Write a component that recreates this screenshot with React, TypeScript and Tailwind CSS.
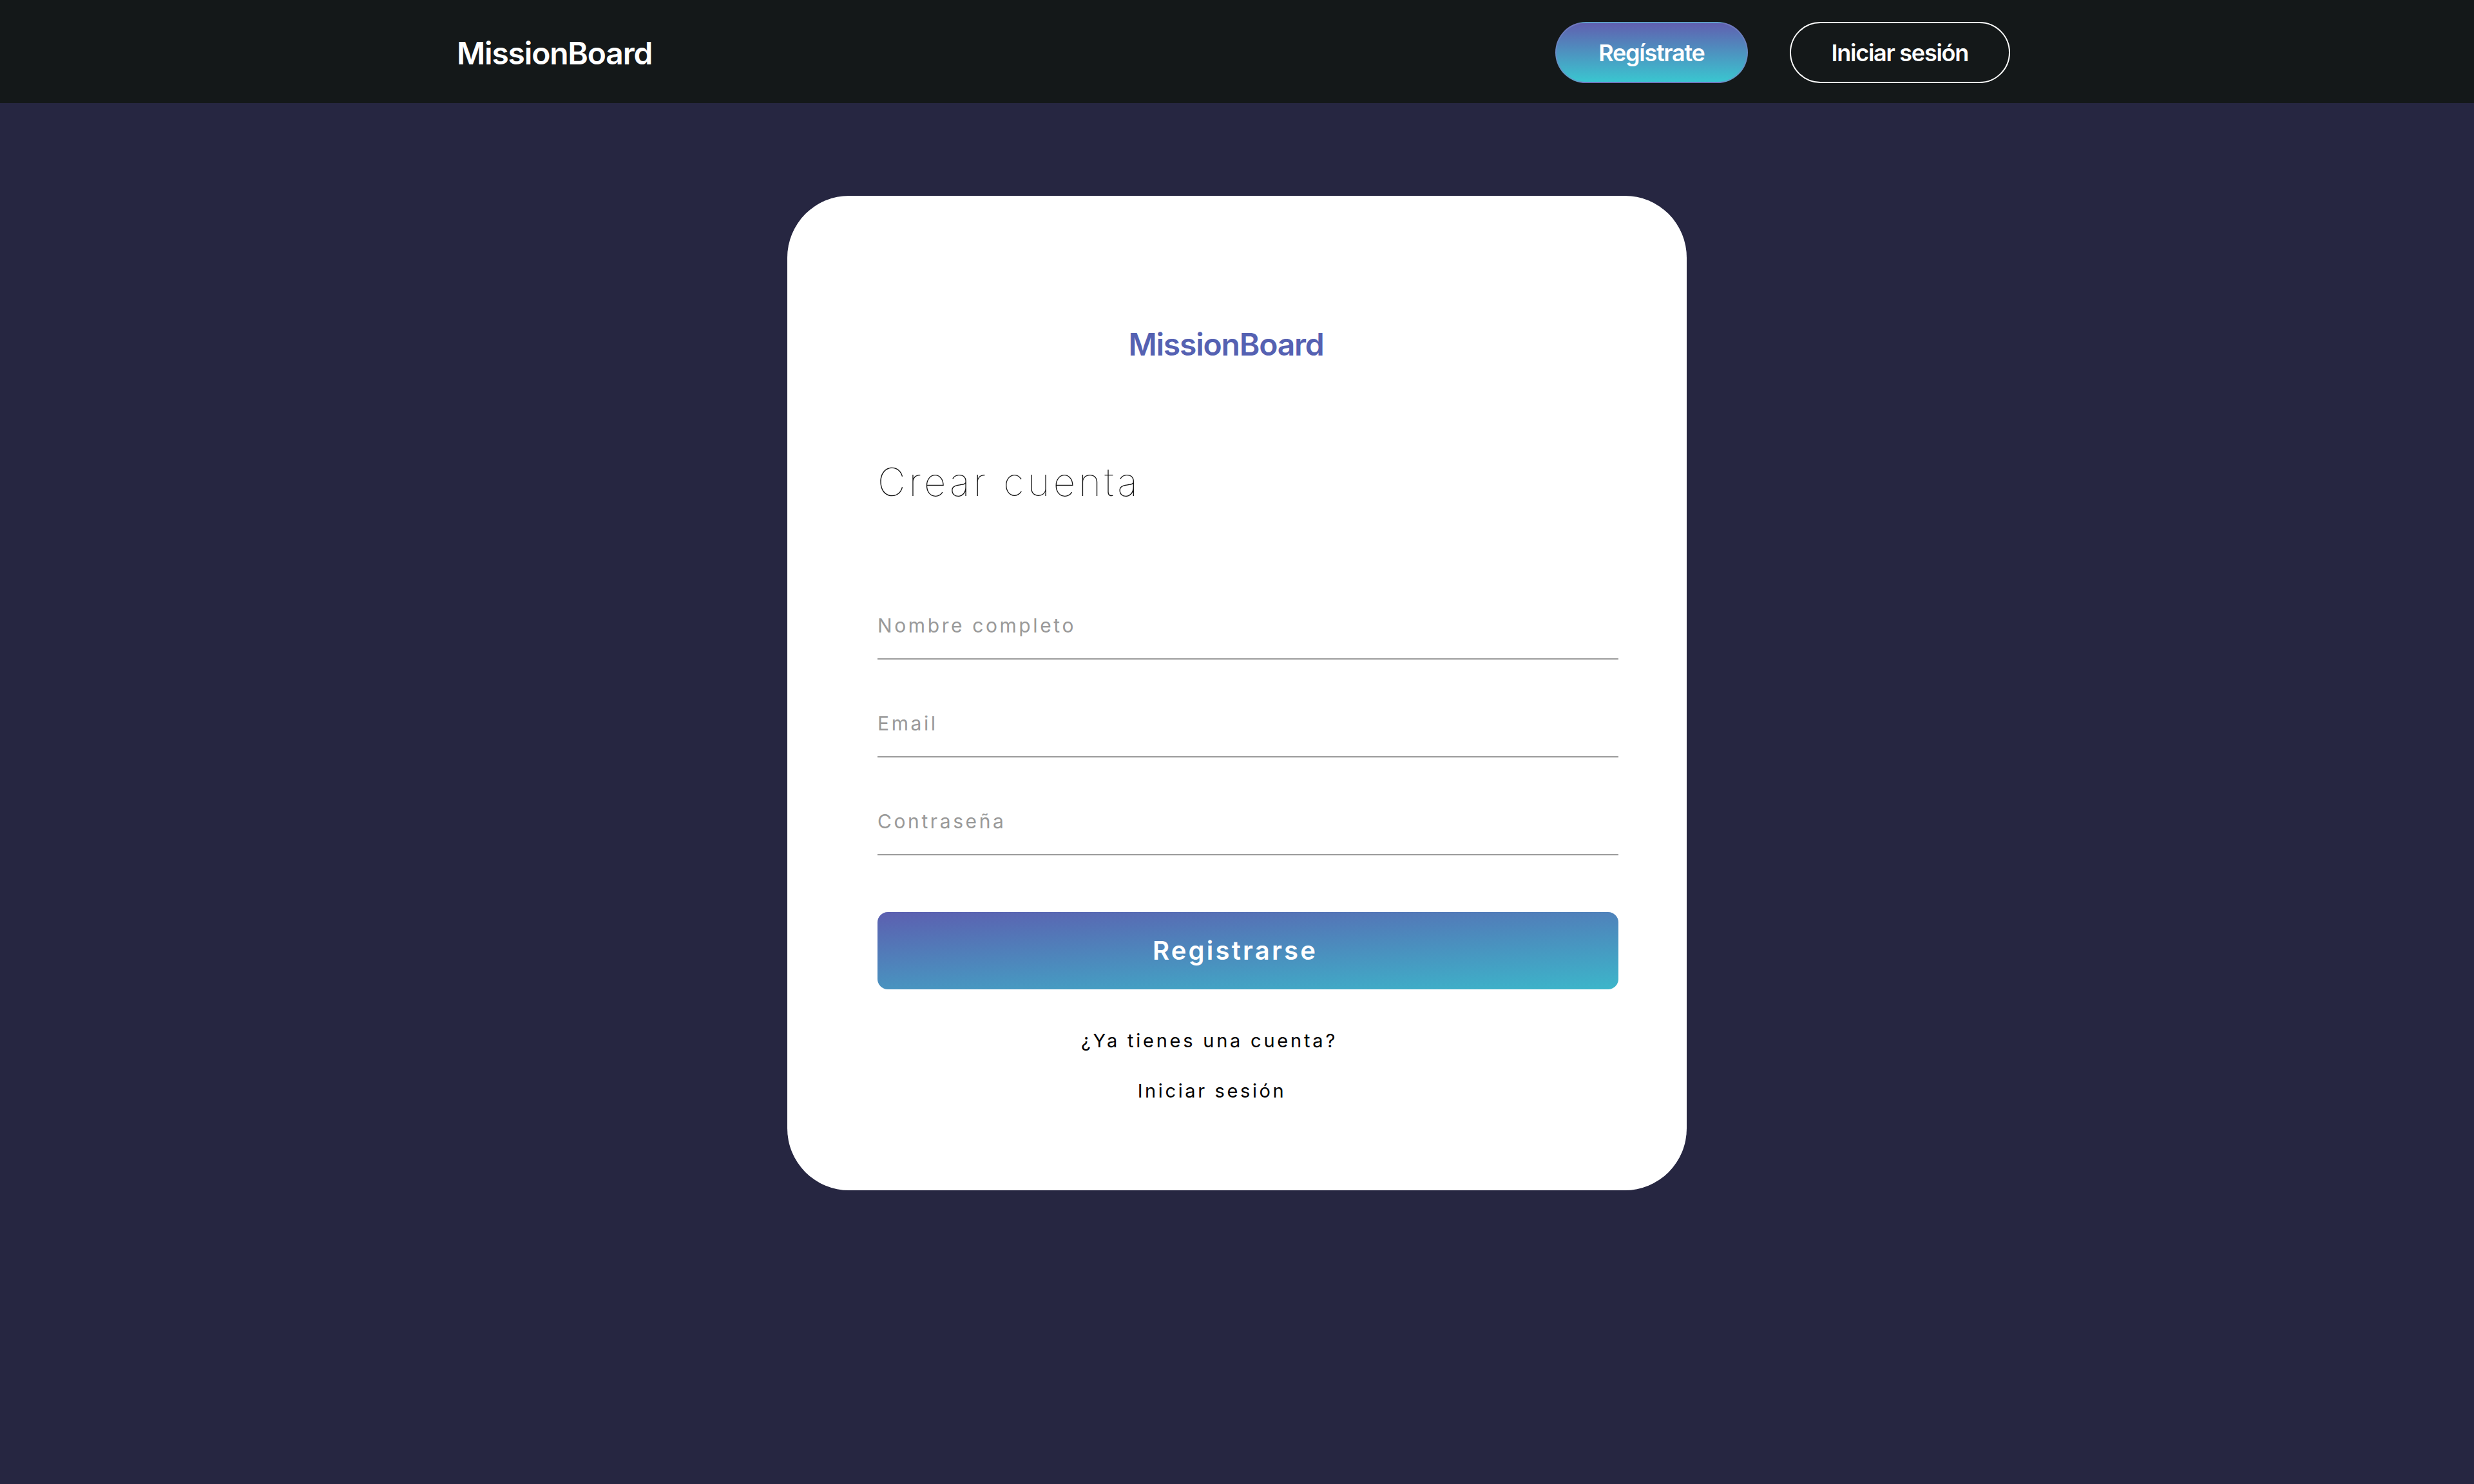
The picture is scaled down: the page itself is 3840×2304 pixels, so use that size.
import React from "react";

export default function App() {
  return (
    <div className="min-h-screen flex flex-col bg-[#262641]" style={{ fontFamily: "Inter, 'Noto Sans', sans-serif" }}>
      <header className="h-[160px] bg-[#141819] shrink-0">
        <div className="pl-[709px] pr-[720px] h-full flex items-center justify-between">
          <div className="text-white text-[48px] leading-none font-semibold tracking-[-0.025em] mt-[5px]">MissionBoard</div>
          <div className="flex items-center gap-[65px] mt-[3px]">
            <button className="h-[95px] px-[65px] rounded-full text-white text-[36px] font-semibold leading-none tracking-[-0.035em] bg-[linear-gradient(180deg,#6060b0,#3ac6d0)] border-2 border-[#7a86c4]/60">
              Regístrate
            </button>
            <button className="h-[95px] px-[63px] rounded-full text-white text-[36px] font-semibold leading-none tracking-[-0.035em] border-2 border-white">
              Iniciar sesión
            </button>
          </div>
        </div>
      </header>
      <main className="flex-1 flex justify-center pt-[144px]">
        <div className="w-[1396px] h-[1544px] bg-white rounded-[96px] pl-[140px] pr-[106px] pt-[207px] pb-[140px] flex flex-col">
          <div className="text-center pr-[68px] text-[48px] leading-none font-semibold text-[#5561b2] tracking-[-0.025em]">MissionBoard</div>
          <h1 className="mt-[159px] text-[60px] leading-none font-thin tracking-[0.085em] text-[#111]">Crear cuenta</h1>
          <div className="mt-[178px] flex flex-col gap-[84px]">
            <input
              type="text"
              placeholder="Nombre completo"
              className="block w-full text-[30px] leading-[30px] h-[68px] pt-0 pb-[36px] border-b-2 border-[#9b9b9b] outline-none tracking-[0.12em] placeholder:text-[#999] text-[#333]"
            />
            <input
              type="email"
              placeholder="Email"
              className="block w-full text-[30px] leading-[30px] h-[68px] pt-0 pb-[36px] border-b-2 border-[#9b9b9b] outline-none tracking-[0.12em] placeholder:text-[#999] text-[#333]"
            />
            <input
              type="password"
              placeholder="Contraseña"
              className="block w-full text-[30px] leading-[30px] h-[68px] pt-0 pb-[36px] border-b-2 border-[#9b9b9b] outline-none tracking-[0.12em] placeholder:text-[#999] text-[#333]"
            />
          </div>
          <button className="mt-[88px] h-[120px] w-full rounded-[16px] bg-[linear-gradient(176deg,#5c5fb0,#3cb6ca)] text-white text-[40px] leading-none font-semibold tracking-[0.08em] pr-[40px]">
            Registrarse
          </button>
          <p className="mt-[65px] text-center pr-[120px] text-[29px] leading-none text-black tracking-[0.13em]">¿Ya tienes una cuenta?</p>
          <a className="mt-[49px] block text-center pr-[112px] text-[29px] leading-none text-black tracking-[0.125em]">Iniciar sesión</a>
        </div>
      </main>
    </div>
  );
}
